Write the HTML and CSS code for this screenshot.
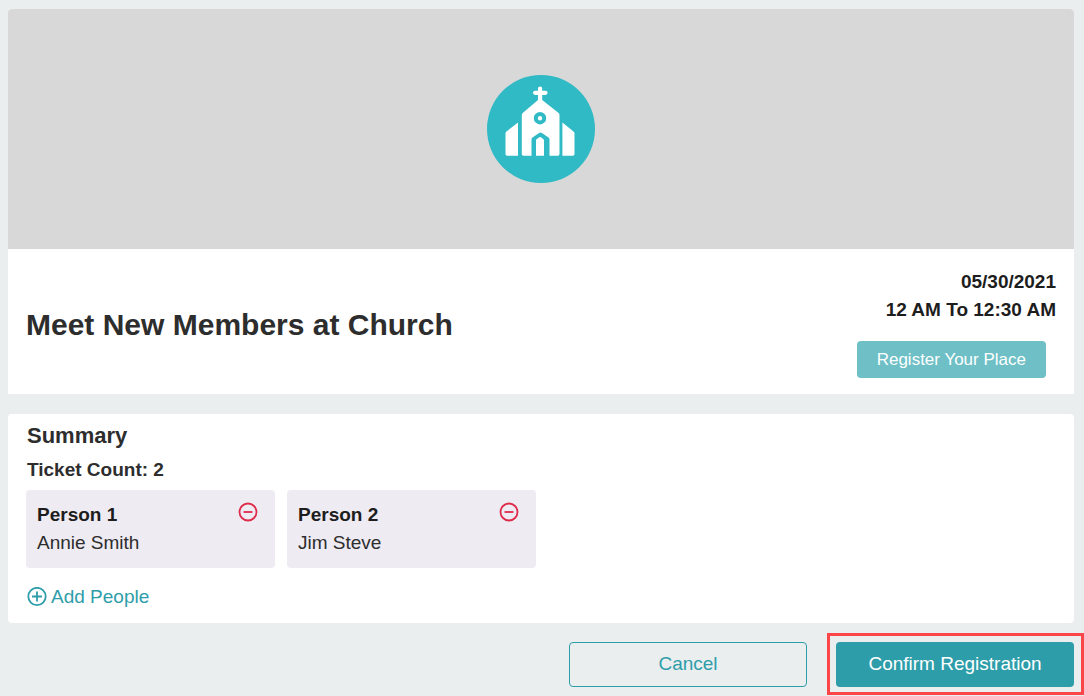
FILE: index.html
```html
<!DOCTYPE html>
<html lang="en">
<head>
<meta charset="utf-8">
<meta name="viewport" content="width=device-width, initial-scale=1">
<title>Meet New Members at Church</title>
<link rel="stylesheet" href="styles.css">
</head>
<body>
<main class="page">
  <section class="event">
    <div class="hero">
      <svg class="logo" viewBox="0 0 108 108" role="img" aria-label="Church">
        <circle cx="54" cy="54" r="54" fill="#30bac5"/>
        <g fill="#fff">
          <path d="M51 13.500a2.100 2.100 0 0 1 4.200 0v2.200h3.300a2.100 2.100 0 0 1 0 4.200h-3.300v5.100l16.100 12.700q1.200 1 1.200 2.400v39q0 1.600-1.600 1.600h-8.400V64.500q0-1.200-1-1.900l-6.600-4.500q-1.400-1-2.800 0l-6.600 4.500q-1 .7-1 1.900v16.200h-8.100q-1.600 0-1.600-1.600v-39q0-1.400 1.200-2.400l15-12.700v-5.100h-2.900a2.100 2.100 0 0 1 0-4.200h2.900z"/>
          <path d="M31 47.500v33.200H20.100q-1.600 0-1.600-1.600V58.400q0-1.200 1-2z"/>
          <path d="M75.400 47.500v33.200h10.500q1.600 0 1.600-1.600V58.400q0-1.200-1-2z"/>
          <path d="M49 80.700V65.500q0-1 .8-1.500l2.600-1.800q.8-.5 1.600 0l2.200 1.800q.8.500.8 1.500v15.200z"/>
        </g>
        <circle cx="53" cy="43.200" r="4.200" fill="#fff" stroke="#30bac5" stroke-width="4"/>
      </svg>
    </div>
    <div class="details">
      <h1 class="title">Meet New Members at Church</h1>
      <div class="schedule">
        <p class="when">05/30/2021</p>
        <p class="when">12 AM To 12:30 AM</p>
        <button class="btn register" type="button">Register Your Place</button>
      </div>
    </div>
  </section>

  <section class="summary">
    <h2 class="heading">Summary</h2>
    <p class="count">Ticket Count: 2</p>
    <div class="people">
      <article class="person">
        <div>
          <h3 class="label">Person 1</h3>
          <p class="name">Annie Smith</p>
        </div>
        <button class="icon-btn" type="button" aria-label="Remove Person 1">
          <svg class="icon" viewBox="0 0 20 20"><circle cx="10" cy="10" r="8.500"/><path d="M5.500 10h9"/></svg>
        </button>
      </article>
      <article class="person">
        <div>
          <h3 class="label">Person 2</h3>
          <p class="name">Jim Steve</p>
        </div>
        <button class="icon-btn" type="button" aria-label="Remove Person 2">
          <svg class="icon" viewBox="0 0 20 20"><circle cx="10" cy="10" r="8.500"/><path d="M5.500 10h9"/></svg>
        </button>
      </article>
    </div>
    <button class="add" type="button">
      <svg class="icon" viewBox="0 0 20 20"><circle cx="10" cy="9.500" r="8.700"/><path d="M5 9.500h10M10 4.500v10"/></svg>
      Add People
    </button>
  </section>

  <div class="actions">
    <button class="btn cancel" type="button">Cancel</button>
    <div class="highlight">
      <button class="btn confirm" type="button">Confirm Registration</button>
    </div>
  </div>
</main>
</body>
</html>
```
FILE: styles.css
```css
* {
  box-sizing: border-box;
}

body {
  margin: 0;
  background: #eaeeef;
  color: #2d2d2d;
  font-family: "Liberation Sans", Arial, sans-serif;
  font-size: 19px;
  line-height: 28px;
}

h1, h2, h3, p {
  margin: 0;
}

button {
  font: inherit;
  cursor: pointer;
}

.page {
  padding: 9px 10px 9px 8px;
}

.event {
  background: #fff;
  border-radius: 4px 4px 0 0;
  overflow: hidden;
}

.hero {
  display: flex;
  justify-content: center;
  align-items: center;
  height: 240px;
  background: #d8d8d8;
}

.logo {
  width: 108px;
  height: 108px;
}

.details {
  display: flex;
  justify-content: space-between;
  align-items: center;
  padding: 19px 18px 16px;
}

.title {
  font-size: 30px;
  line-height: 40px;
  padding-top: 4px;
}

.schedule {
  display: flex;
  flex-direction: column;
  align-items: flex-end;
}

.when {
  color: #1d1d1d;
  font-weight: bold;
}

.btn {
  border: 1px solid transparent;
  border-radius: 4px;
}

.register {
  height: 37px;
  margin: 17px 10px 0 0;
  padding: 0 19px;
  background: #6ec0c6;
  color: #fff;
  font-size: 17px;
  line-height: 20px;
}

.summary {
  margin-top: 20px;
  padding: 8px 18px 12px;
  background: #fff;
  border-radius: 4px;
}

.heading {
  padding-left: 1px;
  font-size: 22px;
  line-height: 28px;
}

.count {
  padding: 6px 1px;
  font-weight: bold;
}

.people {
  display: flex;
  flex-wrap: wrap;
  gap: 12px;
}

.person {
  display: flex;
  justify-content: space-between;
  align-items: flex-start;
  width: 249px;
  padding: 11px 17px 11px 11px;
  background: #eeebf2;
  border-radius: 4px;
}

.label {
  color: #1d1d1d;
  font-size: 19px;
}

.name {
  color: #2d2d2d;
}

.icon {
  display: block;
  width: 20px;
  height: 20px;
  fill: none;
  stroke: currentColor;
  stroke-width: 1.800;
}

.icon-btn {
  margin-top: 1px;
  padding: 0;
  border: 0;
  background: none;
  color: #de2b4b;
}

.add {
  display: flex;
  align-items: center;
  gap: 4px;
  margin-top: 15px;
  padding: 0 1px;
  border: 0;
  background: none;
  color: #2e9daa;
}

.actions {
  display: flex;
  justify-content: flex-end;
  gap: 29px;
  margin-top: 19px;
}

.cancel,
.confirm {
  width: 238px;
  height: 45px;
  padding: 0 0 2px;
}

.cancel {
  border-color: #2e9daa;
  background: transparent;
  color: #2e9daa;
}

.confirm {
  display: block;
  background: #2e9daa;
  color: #fff;
}

.highlight {
  position: relative;
}

.highlight::after {
  content: "";
  position: absolute;
  inset: -9px -10px -8px -9px;
  border: 3px solid #fc4549;
  pointer-events: none;
}
```
